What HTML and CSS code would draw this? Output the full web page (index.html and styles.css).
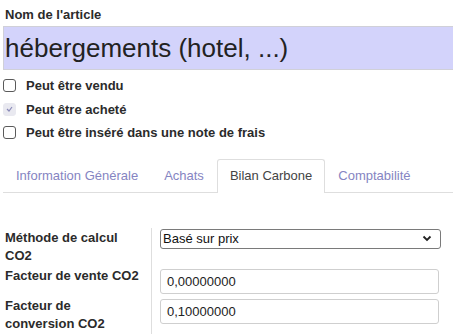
FILE: index.html
```html
<!DOCTYPE html>
<html lang="fr">
<head>
    <meta charset="UTF-8">
    <title>Article</title>
    <link rel="stylesheet" href="styles.css">
</head>
<body>
    <div class="sheet">
        <!-- Nom -->
        <div class="field-name">
            <label class="top-label">Nom de l'article</label>
            <div class="name-input">hébergements (hotel, ...)</div>
        </div>

        <!-- Options -->
        <div class="options">
            <div class="option"><span class="box"></span><span class="opt-label">Peut être vendu</span></div>
            <div class="option"><span class="box checked"><svg width="7" height="6" viewBox="0 0 7 6"><path d="M1 3 L3 5 L6 1" fill="none" stroke="#8a8ab8" stroke-width="1.2"/></svg></span><span class="opt-label">Peut être acheté</span></div>
            <div class="option"><span class="box"></span><span class="opt-label">Peut être inséré dans une note de frais</span></div>
        </div>

        <!-- Onglets -->
        <div class="tabs">
            <div class="tab">Information Générale</div>
            <div class="tab">Achats</div>
            <div class="tab active">Bilan Carbone</div>
            <div class="tab">Comptabilité</div>
        </div>

        <!-- Formulaire -->
        <div class="form">
            <div class="row">
                <div class="cell-label">Méthode de calcul CO2</div>
                <div class="cell-value">
                    <div class="select">
                        <span>Basé sur prix</span>
                        <svg width="10" height="7" viewBox="0 0 10 7"><path d="M1.5 1.5 L5 5 L8.5 1.5" fill="none" stroke="#222" stroke-width="1.8"/></svg>
                    </div>
                </div>
            </div>
            <div class="row">
                <div class="cell-label">Facteur de vente CO2</div>
                <div class="cell-value"><div class="input">0,00000000</div></div>
            </div>
            <div class="row">
                <div class="cell-label">Facteur de conversion CO2</div>
                <div class="cell-value"><div class="input">0,10000000</div></div>
            </div>
        </div>
    </div>
</body>
</html>
```

FILE: styles.css
```css
body {
    margin: 0;
    padding: 0;
    background-color: white;
    color: #2b2b2b;
    font-family: 'Liberation Sans', Arial, sans-serif;
    font-size: 13px;
    overflow: hidden;
}

.sheet {
    padding: 7px 0 0 3px;
}

.top-label {
    display: block;
    font-weight: bold;
    line-height: 16px;
    padding-left: 2px;
}

.name-input {
    margin-top: 3px;
    height: 42px;
    line-height: 42px;
    background-color: #d3d3fb;
    border: 1px solid #d0d0d8;
    border-right: none;
    padding-left: 1px;
    font-size: 26px;
    color: #222;
}

.options {
    margin-top: 4px;
}

.option {
    display: flex;
    align-items: center;
    height: 23.5px;
}

.box {
    width: 11px;
    height: 11px;
    border: 1px solid #5a5a5a;
    border-radius: 3px;
    display: flex;
    align-items: center;
    justify-content: center;
}

.box.checked {
    border-color: #e9e9f0;
    background-color: #e9e9f0;
}

.opt-label {
    margin-left: 10px;
    font-weight: bold;
}

.tabs {
    display: flex;
    margin-top: 14px;
    border-bottom: 1px solid #dedede;
    height: 33px;
}

.tab {
    padding: 0 12px;
    line-height: 31px;
    color: #8584c2;
    border: 1px solid transparent;
    border-bottom: none;
}

.tab.active {
    color: #444;
    border-color: #dedede;
    border-radius: 3px 3px 0 0;
    background-color: white;
    height: 33px;
}

.form {
    margin-top: 35px;
}

.row {
    display: flex;
}

.cell-label {
    width: 136px;
    padding: 1px 10px 1px 2px;
    font-weight: bold;
    line-height: 18px;
}

.cell-value {
    border-left: 1px solid #dedede;
    padding: 1px 0 2px 8px;
}

.select {
    width: 269px;
    height: 18px;
    border: 1px solid #7a7a7a;
    border-radius: 3px;
    padding: 0 8px 0 2px;
    display: flex;
    align-items: center;
    justify-content: space-between;
    color: #111;
}

.input {
    width: 271px;
    height: 23px;
    line-height: 23px;
    border: 1px solid #cfcfcf;
    border-radius: 3px;
    padding-left: 6px;
    color: #222;
    margin-top: 2px;
}
```
